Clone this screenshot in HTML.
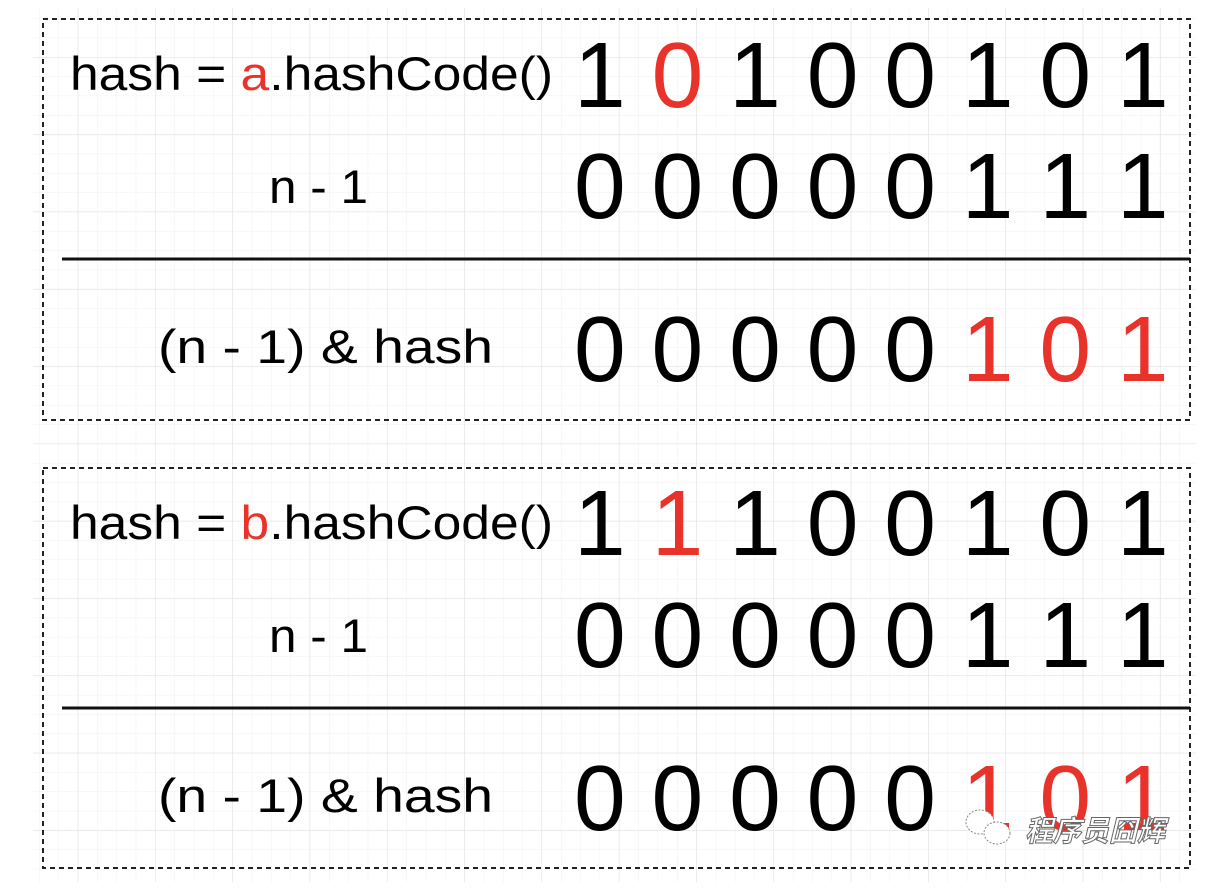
<!DOCTYPE html>
<html><head><meta charset="utf-8"><style>
html,body{margin:0;padding:0;background:#fff;width:1212px;height:892px;overflow:hidden}
svg{display:block}
text{font-family:"Liberation Sans",Arial,sans-serif}
</style></head><body>
<svg width="1212" height="892" viewBox="0 0 1212 892" xmlns="http://www.w3.org/2000/svg">
<defs>
<pattern id="minor" x="0.4" y="-1" width="19.33" height="19.33" patternUnits="userSpaceOnUse">
<path d="M0 0V19.33M0 0H19.33" stroke="#f1f1f1" stroke-width="1" fill="none"/>
</pattern>
<pattern id="major" x="0.4" y="-20.3" width="77.3" height="77.3" patternUnits="userSpaceOnUse">
<path d="M0 0V77.3M0 0H77.3" stroke="#e2e2e2" stroke-width="1.2" fill="none"/>
</pattern>
</defs>
<rect x="33" y="8" width="1163" height="874" fill="url(#minor)"/>
<rect x="33" y="8" width="1163" height="874" fill="url(#major)"/>
<g fill="none" stroke="#222" stroke-width="2" stroke-dasharray="5,4">
<rect x="43" y="19" width="1147" height="401"/>
<rect x="43" y="468" width="1147" height="400"/>
</g>
<line x1="62" y1="259" x2="1190" y2="259" stroke="#111" stroke-width="3"/>
<line x1="62" y1="708" x2="1190" y2="708" stroke="#111" stroke-width="3"/>
<g font-size="47" fill="#000" xml:space="preserve">
<text x="70" y="90" textLength="483" lengthAdjust="spacingAndGlyphs">hash = <tspan fill="#e8322a">a</tspan>.hashCode()</text>
<text x="269" y="203" textLength="99" lengthAdjust="spacingAndGlyphs">n - 1</text>
<text x="158" y="363" textLength="335" lengthAdjust="spacingAndGlyphs">(n - 1)  &amp; hash</text>
<text x="70" y="539" textLength="483" lengthAdjust="spacingAndGlyphs">hash = <tspan fill="#e8322a">b</tspan>.hashCode()</text>
<text x="269" y="652" textLength="99" lengthAdjust="spacingAndGlyphs">n - 1</text>
<text x="158" y="812" textLength="335" lengthAdjust="spacingAndGlyphs">(n - 1)  &amp; hash</text>
</g>
<g font-size="93" fill="#000" xml:space="preserve">
<text x="574" y="107">1 <tspan fill="#e8322a">0</tspan> 1 0 0 1 0 1</text>
<text x="574" y="218">0 0 0 0 0 1 1 1</text>
<text x="574" y="381">0 0 0 0 0 <tspan fill="#e8322a">1 0 1</tspan></text>
<text x="574" y="555">1 <tspan fill="#e8322a">1</tspan> 1 0 0 1 0 1</text>
<text x="574" y="667">0 0 0 0 0 1 1 1</text>
<text x="574" y="830">0 0 0 0 0 <tspan fill="#e8322a">1 0 1</tspan></text>
</g>
<g fill="#fff" stroke="#888" stroke-width="1" stroke-dasharray="2,1.5">
<ellipse cx="980" cy="822" rx="14" ry="12"/>
<ellipse cx="997" cy="833" rx="13" ry="11"/>
</g>
<text x="1025" y="841" font-size="29" font-weight="bold" fill="#fff" stroke="#666" stroke-width="1" textLength="140" lengthAdjust="spacingAndGlyphs" style="font-family:'Liberation Sans','Noto Sans CJK SC',sans-serif;font-style:italic">程序员囧辉</text>
</svg>
</body></html>
